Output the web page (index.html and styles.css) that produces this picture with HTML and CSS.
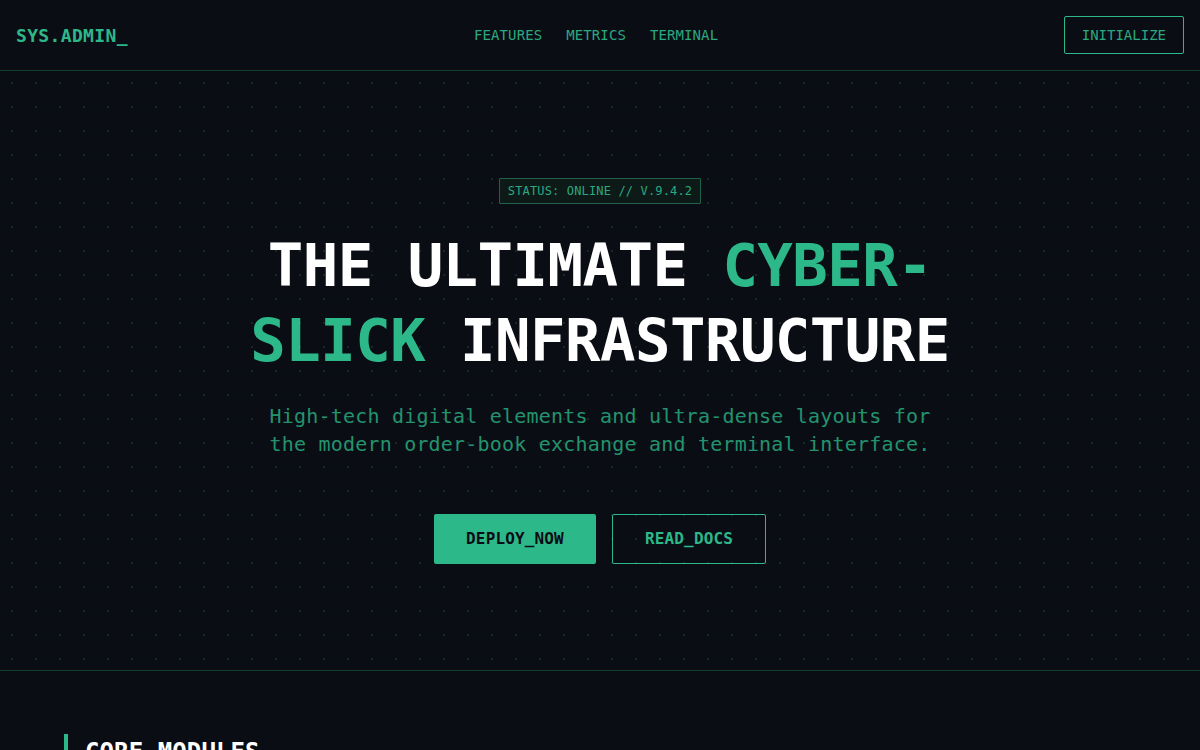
FILE: index.html
```html
<!DOCTYPE html>
<html lang="en">
<head>
<meta charset="utf-8">
<title>SYS.ADMIN_</title>
<link rel="stylesheet" href="styles.css">
</head>
<body>
<header class="topbar">
  <div class="logo">SYS.ADMIN_</div>
  <nav class="nav">
    <a href="#">FEATURES</a>
    <a href="#">METRICS</a>
    <a href="#">TERMINAL</a>
  </nav>
  <a class="init-btn" href="#">INITIALIZE</a>
</header>
<section class="hero">
  <div class="badge">STATUS: ONLINE // V.9.4.2</div>
  <h1 class="title">THE ULTIMATE <span class="accent">CYBER-SLICK</span> INFRASTRUCTURE</h1>
  <p class="lead">High-tech digital elements and ultra-dense layouts for the modern order-book exchange and terminal interface.</p>
  <div class="actions">
    <a class="btn btn-primary" href="#">DEPLOY_NOW</a>
    <a class="btn btn-outline" href="#">READ_DOCS</a>
  </div>
</section>
<section class="modules">
  <h2 class="section-title">CORE MODULES</h2>
</section>
</body>
</html>
```
FILE: styles.css
```css
* { box-sizing: border-box; }
html, body {
  margin: 0;
  padding: 0;
  background: #0b0d15;
  color: #ffffff;
  font-family: "DejaVu Sans Mono", "Liberation Mono", monospace;
  overflow: hidden;
}
a { text-decoration: none; }

.topbar {
  height: 71px;
  border-bottom: 1px solid #143d2e;
  display: flex;
  align-items: center;
  justify-content: space-between;
  padding: 0 16px;
  position: relative;
}
.logo {
  font-size: 18px;
  font-weight: bold;
  letter-spacing: 0.35px;
  color: #2db88a;
}
.nav {
  position: absolute;
  left: 474px;
  top: 27px;
  display: flex;
  gap: 24px;
}
.nav a {
  font-size: 14px;
  letter-spacing: 0.1px;
  color: #2aa980;
}
.init-btn {
  display: flex;
  align-items: center;
  height: 38px;
  padding: 0 17px;
  border: 1px solid #2db88a;
  border-radius: 2px;
  font-size: 14px;
  color: #2aa980;
}

.hero {
  height: 600px;
  border-bottom: 1px solid #143d2e;
  display: flex;
  flex-direction: column;
  align-items: center;
  justify-content: center;
  text-align: center;
  background-color: #0b0d15;
  background-image: radial-gradient(circle at center, #152a26 0.9px, transparent 1.3px);
  background-size: 24px 24px;
  background-position: 0 0;
}
.badge {
  height: 26px;
  display: flex;
  align-items: center;
  padding: 0 8px;
  border: 1px solid #1d6249;
  background: #0d1a18;
  border-radius: 1px;
  font-size: 12px;
  letter-spacing: 0.15px;
  color: #2aa980;
  margin-bottom: 24px;
}
.title {
  margin: 0 0 24px;
  max-width: 780px;
  font-size: 59px;
  line-height: 75px;
  font-weight: bold;
  letter-spacing: -0.55px;
  color: #ffffff;
}
.accent { color: #2db88a; }
.lead {
  margin: 0 0 56px;
  max-width: 672px;
  font-size: 20px;
  line-height: 28px;
  letter-spacing: 0.2px;
  color: #23936d;
}
.actions {
  display: flex;
  gap: 16px;
}
.btn {
  height: 50px;
  display: flex;
  align-items: center;
  justify-content: center;
  border-radius: 2px;
  font-size: 16px;
  font-weight: bold;
  letter-spacing: 0.15px;
}
.btn-primary {
  width: 162px;
  background: #2db88a;
  color: #0b0d15;
}
.btn-outline {
  width: 154px;
  border: 1px solid #2db88a;
  color: #2db88a;
}

.modules {
  padding: 63px 64px 0;
}
.section-title {
  margin: 0;
  border-left: 4px solid #2db88a;
  padding-left: 17px;
  font-size: 24px;
  line-height: 36px;
  font-weight: bold;
  color: #ffffff;
  letter-spacing: 0.1px;
}
```
